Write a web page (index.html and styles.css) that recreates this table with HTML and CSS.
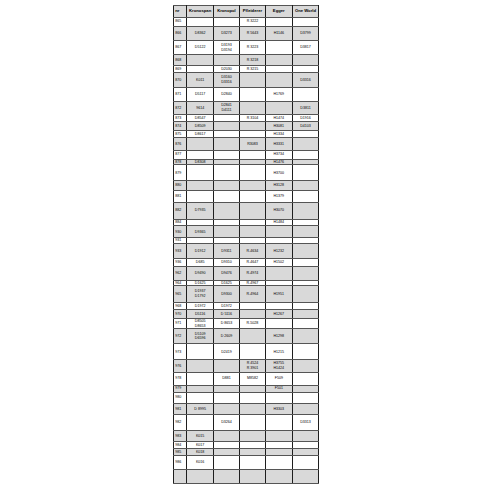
FILE: index.html
```html
<!DOCTYPE html>
<html>
<head>
<meta charset="utf-8">
<link rel="stylesheet" href="styles.css">
</head>
<body>
<table class="grid">
<colgroup><col class="c-nr"><col class="c-a"><col class="c-b"><col class="c-c"><col class="c-d"><col class="c-e"></colgroup>
<tr class="head"><th>nr</th><th>Kronospan</th><th>Kronopol</th><th>Pfleiderer</th><th>Egger</th><th>One World</th></tr>
<tr><td>865</td><td></td><td></td><td>R 3222</td><td></td><td></td></tr>
<tr><td>866</td><td>D8362</td><td>D3273</td><td>R 5643</td><td>H1146</td><td>D3799</td></tr>
<tr><td>867</td><td>D5122</td><td>D3193<br>D3194</td><td>R 3223</td><td></td><td>D3817</td></tr>
<tr><td>868</td><td></td><td></td><td>R 3218</td><td></td><td></td></tr>
<tr><td>869</td><td></td><td>D2030</td><td>R 3215</td><td></td><td></td></tr>
<tr><td>870</td><td>K011</td><td>D3160<br>D3316</td><td></td><td></td><td>D3316</td></tr>
<tr><td>871</td><td>D5117</td><td>D2840</td><td></td><td>H1769</td><td></td></tr>
<tr><td>872</td><td>9614</td><td>D2841<br>D4111</td><td></td><td></td><td>D3811</td></tr>
<tr><td>873</td><td>D8547</td><td></td><td>R 3104</td><td>H1474</td><td>D1916</td></tr>
<tr><td>874</td><td>D8509</td><td></td><td></td><td>H3081</td><td>D4103</td></tr>
<tr><td>875</td><td>D8617</td><td></td><td></td><td>H1334</td><td></td></tr>
<tr><td>876</td><td></td><td></td><td>R3083</td><td>H3331</td><td></td></tr>
<tr><td>877</td><td></td><td></td><td></td><td>H3734</td><td></td></tr>
<tr><td>878</td><td>D8308</td><td></td><td></td><td>H1476</td><td></td></tr>
<tr><td>879</td><td></td><td></td><td></td><td>H3700</td><td></td></tr>
<tr><td>880</td><td></td><td></td><td></td><td>H3128</td><td></td></tr>
<tr><td>881</td><td></td><td></td><td></td><td>H1379</td><td></td></tr>
<tr><td>882</td><td>D7935</td><td></td><td></td><td>H3070</td><td></td></tr>
<tr><td>884</td><td></td><td></td><td></td><td>H1484</td><td></td></tr>
<tr><td>930</td><td>D9365</td><td></td><td></td><td></td><td></td></tr>
<tr><td>931</td><td></td><td></td><td></td><td></td><td></td></tr>
<tr><td>933</td><td>D1912</td><td>D9311</td><td>R-4634</td><td>H1232</td><td></td></tr>
<tr><td>936</td><td>D685</td><td>D9310</td><td>R-4647</td><td>H1502</td><td></td></tr>
<tr><td>962</td><td>D9490</td><td>D9476</td><td>R-4974</td><td></td><td></td></tr>
<tr><td>964</td><td>D1625</td><td>D1625</td><td>R-4967</td><td></td><td></td></tr>
<tr><td>965</td><td>D1937<br>D1792</td><td>D9300</td><td>R-4964</td><td>H1951</td><td></td></tr>
<tr><td>968</td><td>D1972</td><td>D1972</td><td></td><td></td><td></td></tr>
<tr><td>970</td><td>D5116</td><td>D 5116</td><td></td><td>H1267</td><td></td></tr>
<tr><td>971</td><td>D8505<br>D8653</td><td>D 8653</td><td>R-5028</td><td></td><td></td></tr>
<tr><td>972</td><td>D5109<br>D6596</td><td>D 2609</td><td></td><td>H1298</td><td></td></tr>
<tr><td>973</td><td></td><td>D2419</td><td></td><td>H1215</td><td></td></tr>
<tr><td>976</td><td></td><td></td><td>R 4524<br>R 3901</td><td>H3755<br>H1424</td><td></td></tr>
<tr><td>978</td><td></td><td>D881</td><td>M8582</td><td>F509</td><td></td></tr>
<tr><td>979</td><td></td><td></td><td></td><td>F501</td><td></td></tr>
<tr><td>980</td><td></td><td></td><td></td><td></td><td></td></tr>
<tr><td>981</td><td>D 8995</td><td></td><td></td><td>H3303</td><td></td></tr>
<tr><td>982</td><td></td><td>D3264</td><td></td><td></td><td>D3313</td></tr>
<tr><td>983</td><td>K015</td><td></td><td></td><td></td><td></td></tr>
<tr><td>984</td><td>K017</td><td></td><td></td><td></td><td></td></tr>
<tr><td>985</td><td>K018</td><td></td><td></td><td></td><td></td></tr>
<tr><td>986</td><td>K016</td><td></td><td></td><td></td><td></td></tr>
<tr><td></td><td></td><td></td><td></td><td></td><td></td></tr>
</table>
</body>
</html>
```
FILE: styles.css
```css
html, body {
  margin: 0;
  padding: 0;
  background: #ffffff;
}
body {
  padding-top: 4.5px;
  font-family: "Liberation Sans", Arial, sans-serif;
  color: #000;
}
.grid {
  margin: 0 auto;
  border-collapse: collapse;
  table-layout: fixed;
  width: 146px;
  border: 1px solid #222;
}
.c-nr { width: 13.7px; }
.c-a { width: 26.6px; }
.c-b { width: 26px; }
.c-c { width: 26px; }
.c-d { width: 26.7px; }
.c-e { width: 26.7px; }
.grid th, .grid td {
  padding: 0;
  font-size: 3.6px;
  line-height: 4.6px;
  text-align: center;
  vertical-align: middle;
  border-left: 1px solid #1e1e1e;
  border-right: 1px solid #1e1e1e;
  border-top: 0.7px solid #555;
  border-bottom: 0.7px solid #555;
  white-space: nowrap;
  overflow: hidden;
}
.grid th {
  font-size: 4.2px;
  font-weight: bold;
}
.grid td:first-child, .grid th:first-child {
  text-align: left;
  padding-left: 1.5px;
}
.grid tr:nth-child(odd) { background: #d9d9d9; }
.grid tr:nth-child(even) { background: #ffffff; }

.grid tr:nth-child(1) { height: 12px; }
.grid tr:nth-child(2) { height: 9.3px; }
.grid tr:nth-child(3) { height: 14.7px; }
.grid tr:nth-child(4) { height: 13.6px; }
.grid tr:nth-child(5) { height: 10.7px; }
.grid tr:nth-child(6) { height: 7.3px; }
.grid tr:nth-child(7) { height: 15px; }
.grid tr:nth-child(8) { height: 14px; }
.grid tr:nth-child(9) { height: 13px; }
.grid tr:nth-child(10) { height: 7.4px; }
.grid tr:nth-child(11) { height: 8.3px; }
.grid tr:nth-child(12) { height: 7.7px; }
.grid tr:nth-child(13) { height: 12.3px; }
.grid tr:nth-child(14) { height: 9px; }
.grid tr:nth-child(15) { height: 5px; }
.grid tr:nth-child(16) { height: 16px; }
.grid tr:nth-child(17) { height: 9.3px; }
.grid tr:nth-child(18) { height: 12px; }
.grid tr:nth-child(19) { height: 17px; }
.grid tr:nth-child(20) { height: 6.7px; }
.grid tr:nth-child(21) { height: 12px; }
.grid tr:nth-child(22) { height: 5.7px; }
.grid tr:nth-child(23) { height: 14.6px; }
.grid tr:nth-child(24) { height: 8.4px; }
.grid tr:nth-child(25) { height: 13.6px; }
.grid tr:nth-child(26) { height: 4.7px; }
.grid tr:nth-child(27) { height: 16.7px; }
.grid tr:nth-child(28) { height: 7.6px; }
.grid tr:nth-child(29) { height: 8.7px; }
.grid tr:nth-child(30) { height: 9.7px; }
.grid tr:nth-child(31) { height: 15px; }
.grid tr:nth-child(32) { height: 16px; }
.grid tr:nth-child(33) { height: 12.3px; }
.grid tr:nth-child(34) { height: 13.3px; }
.grid tr:nth-child(35) { height: 6.7px; }
.grid tr:nth-child(36) { height: 11px; }
.grid tr:nth-child(37) { height: 11.7px; }
.grid tr:nth-child(38) { height: 15.6px; }
.grid tr:nth-child(39) { height: 11px; }
.grid tr:nth-child(40) { height: 7.4px; }
.grid tr:nth-child(41) { height: 6.6px; }
.grid tr:nth-child(42) { height: 14px; }
.grid tr:nth-child(43) { height: 14.4px; }
```
